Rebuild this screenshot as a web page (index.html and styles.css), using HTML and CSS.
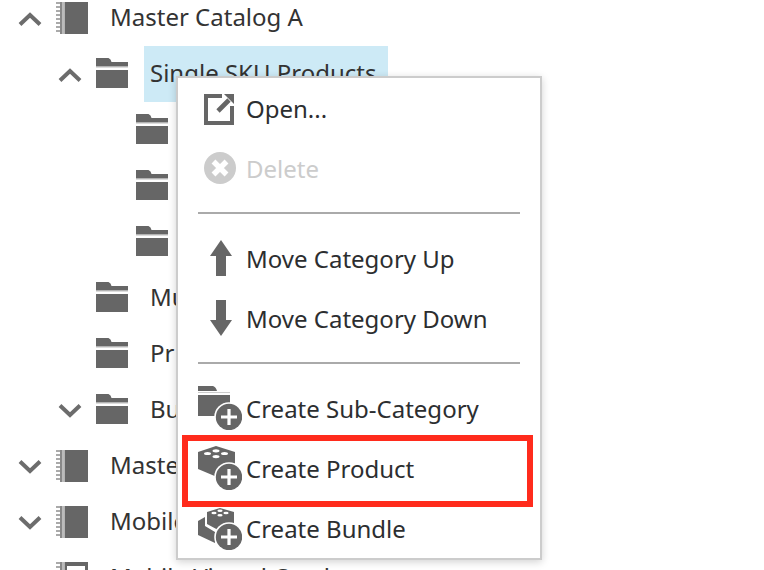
FILE: index.html
```html
<!DOCTYPE html>
<html lang="en">
<head>
<meta charset="utf-8">
<title>Catalogs</title>
<link rel="stylesheet" href="styles.css">
</head>
<body>
<svg class="defs" width="0" height="0" aria-hidden="true">
  <symbol id="up" viewBox="0 0 24 16"><path d="M2 13.500 12 4l10 9.500" fill="none" stroke="#6c6c6c" stroke-width="4"/></symbol>
  <symbol id="down" viewBox="0 0 24 16"><path d="M2 2.500 12 12l10-9.500" fill="none" stroke="#6c6c6c" stroke-width="4"/></symbol>
  <symbol id="book" viewBox="0 0 32 32"><path d="M8.500 0H32v32H8.500z" fill="#666"/><path d="M6 0h2v32H6z" fill="#bbb"/><path d="M4 0h2v32H4z" fill="#888"/><path d="M2 0v32" stroke="#aaa" stroke-width="4" stroke-dasharray="2 2"/></symbol>
  <symbol id="folder" viewBox="0 0 32 32"><path d="M0 0h12.500Q15 1 15.500 4H32v4.500H0zM0 12h32v18H0z" fill="#666"/><path d="M0 9.500h32" stroke="#ddd"/></symbol>
  <symbol id="plus" viewBox="0 0 44 44"><circle cx="31" cy="31" r="14.800" fill="#fff"/><circle cx="31" cy="31" r="13.200" fill="#666"/><path d="M31 23v16M23 31h16" stroke="#fff" stroke-width="3.200"/></symbol>
</svg>
<main class="tree">
  <div class="row"><svg class="chevron"><use href="#up"/></svg><svg class="icon"><use href="#book"/></svg><span class="label">Master Catalog A</span></div>
  <div class="row level1"><svg class="chevron"><use href="#up"/></svg><svg class="icon"><use href="#folder"/></svg><span class="label selected">Single SKU Products</span></div>
  <div class="row level2"><span class="chevron"></span><svg class="icon"><use href="#folder"/></svg></div>
  <div class="row level2"><span class="chevron"></span><svg class="icon"><use href="#folder"/></svg></div>
  <div class="row level2"><span class="chevron"></span><svg class="icon"><use href="#folder"/></svg></div>
  <div class="row level1"><span class="chevron"></span><svg class="icon"><use href="#folder"/></svg><span class="label">Mu</span></div>
  <div class="row level1"><span class="chevron"></span><svg class="icon"><use href="#folder"/></svg><span class="label">Pr</span></div>
  <div class="row level1"><svg class="chevron"><use href="#down"/></svg><svg class="icon"><use href="#folder"/></svg><span class="label">Bu</span></div>
  <div class="row"><svg class="chevron"><use href="#down"/></svg><svg class="icon"><use href="#book"/></svg><span class="label">Master</span></div>
  <div class="row"><svg class="chevron"><use href="#down"/></svg><svg class="icon"><use href="#book"/></svg><span class="label">Mobile</span></div>
  <div class="row"><span class="chevron"></span><svg class="icon" viewBox="0 0 32 32"><use href="#book"/><path d="M11 4h18v24H11z" fill="#fff"/></svg><span class="label">Mobile Virtual Catalog</span></div>
</main>
<nav class="menu">
  <div class="item"><svg class="glyph" viewBox="0 0 44 44"><path d="M24 10H8v27h26V20" fill="none" stroke="#666" stroke-width="4"/><path d="M20 25 31 14" stroke="#666" stroke-width="4.600"/><path d="M26 8h10v10z" fill="#666"/></svg><span class="text">Open...</span></div>
  <div class="item disabled"><svg class="glyph" viewBox="0 0 44 44"><circle cx="22" cy="22" r="16" fill="#ccc"/><path d="m15.500 15.500 13 13m0-13-13 13" stroke="#fff" stroke-width="5.500"/></svg><span class="text">Delete</span></div>
  <hr class="separator">
  <div class="item"><svg class="glyph" viewBox="0 0 44 44"><path d="m23 4 11 16h-6v20H18V20h-6z" fill="#666"/></svg><span class="text">Move Category Up</span></div>
  <div class="item"><svg class="glyph" viewBox="0 0 44 44"><path d="m23 40 11-16h-6V4H18v20h-6z" fill="#666"/></svg><span class="text">Move Category Down</span></div>
  <hr class="separator">
  <div class="item"><svg class="glyph" viewBox="0 0 44 44"><path d="M0 0h15q3 1 4 5H0zM0 9h32v21H0z" fill="#666"/><path d="M0 6.500h32" stroke="#ccc"/><use href="#plus"/></svg><span class="text">Create Sub-Category</span></div>
  <div class="item marked"><svg class="glyph" viewBox="0 0 44 44"><path d="M0 6 18 0l19 6v15L19 31 0 23z" fill="#666"/><g fill="#fff"><ellipse cx="18" cy="4.800" rx="3.500" ry="1.600"/><ellipse cx="9.500" cy="7.500" rx="3.500" ry="1.600"/><ellipse cx="26.500" cy="7.500" rx="3.500" ry="1.600"/><ellipse cx="18" cy="10.600" rx="3.500" ry="1.600"/></g><use href="#plus"/></svg><span class="text">Create Product</span></div>
  <div class="item"><svg class="glyph" viewBox="0 0 44 44"><path d="m0 15 7-4v9l10 6v11L0 29z" fill="#666"/><path d="m9 6 13-4 14 4v12l-14 7-13-7z" fill="#666"/><g fill="#fff"><ellipse cx="22" cy="4.800" rx="2.600" ry="1.200"/><ellipse cx="16" cy="7" rx="2.600" ry="1.200"/><ellipse cx="28" cy="7" rx="2.600" ry="1.200"/><ellipse cx="22" cy="9.300" rx="2.600" ry="1.200"/></g><use href="#plus"/></svg><span class="text">Create Bundle</span></div>
</nav>
</body>
</html>
```
FILE: styles.css
```css
* { box-sizing: border-box; }
body {
  margin: 0;
  background: #fff;
  color: #333;
  font: 24px/56px "Noto Sans", "Open Sans", sans-serif;
  white-space: nowrap;
}
.defs { position: absolute; }
.tree {
  display: flex;
  flex-direction: column;
  justify-content: flex-end;
  height: 570px;
  overflow: hidden;
  padding-top: 0;
}
.row { display: flex; flex: none; align-items: center; height: 56px; padding-left: 18px; }
.row:last-child { margin-bottom: -36px; }
.level1 { padding-left: 58px; }
.level2 { padding-left: 98px; }
.chevron { width: 24px; height: 16px; margin-right: 14px; position: relative; top: 1px; }
.icon { width: 32px; height: 32px; margin-right: 16px; }
.label { height: 56px; padding: 0 6px; line-height: 54px; }
.selected { width: 244px; background: #cdeaf6; }
.menu {
  position: absolute;
  left: 176px;
  top: 76px;
  width: 366px;
  padding: 0 20px;
  background: #fff;
  border: 2px solid #ccc;
  box-shadow: 0 2px 8px rgba(0, 0, 0, .18);
}
.item { position: relative; display: flex; align-items: center; gap: 4px; height: 60px; color: #2c2e30; }
.text { padding-top: 2px; }
.glyph { width: 44px; height: 44px; flex: none; }
.disabled { color: #ccc; }
.separator { height: 2px; margin: 14px 0; border: 0; background: #aaa; }
.marked::after {
  content: "";
  position: absolute;
  box-sizing: border-box;
  left: -16px;
  top: -3px;
  width: 351px;
  height: 72px;
  border: 6px solid #ff2b1c;
}
```
